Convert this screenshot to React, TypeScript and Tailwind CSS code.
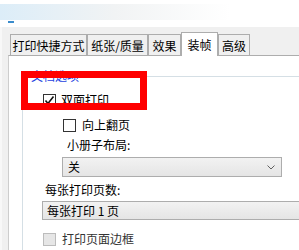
import React from "react";

const font = { fontFamily: '"Noto Sans CJK SC", "Noto Sans", sans-serif' };

function Tab({ label, w, selected }: { label: string; w: number; selected?: boolean }) {
  if (selected) {
    return (
      <div
        className="relative z-10 -mb-px flex h-[24px] items-center justify-center border border-b-0 border-[#adadad] bg-white text-[12px] leading-none text-black"
        style={{ width: w }}
      >
        {label}
      </div>
    );
  }
  return (
    <div
      className="flex h-[21px] items-center justify-center border border-b-0 border-[#adadad] bg-[#f0f0f0] pt-[1px] text-[12px] leading-none text-black"
      style={{ width: w }}
    >
      {label}
    </div>
  );
}

function Check({ checked, disabled }: { checked?: boolean; disabled?: boolean }) {
  return (
    <div
      className={
        disabled
          ? "h-[13px] w-[13px] shrink-0 border border-[#bcbcbc] bg-[#e6e6e6]"
          : "relative h-[13px] w-[13px] shrink-0 border border-[#333333] bg-white"
      }
    >
      {checked && (
        <svg width="11" height="11" viewBox="0 0 11 11" className="absolute left-0 top-0">
          <polyline points="1.5,5.5 4,8.5 9.5,1.5" fill="none" stroke="#111" strokeWidth="1.6" />
        </svg>
      )}
    </div>
  );
}

export default function App() {
  return (
    <div className="relative h-[250px] w-[299px] overflow-hidden bg-white" style={font}>
      {/* top strip */}
      <div className="h-[27px] bg-white pt-[4px]">
        <div className="h-[16px] w-[230px] bg-gradient-to-r from-[#dcedf8] via-[#f1f3f4] to-white" />
        <div className="ml-[8px] mt-[1px] h-[2px] w-[6px] bg-[#3b8ccc]" />
      </div>
      {/* window body */}
      <div className="flex h-[223px]">
        <div className="w-[2px] shrink-0 bg-[#f8f8f8]" />
        <div className="flex flex-1 flex-col bg-[#f0f0f0] pl-[6px] pt-[5px]">
          <div className="flex items-end pl-[2px]">
            <Tab label="打印快捷方式" w={77} />
            <Tab label="纸张/质量" w={61} />
            <Tab label="效果" w={33} />
            <Tab label="装帧" w={37} selected />
            <Tab label="高级" w={32} />
          </div>
          <div className="flex-1 border-l border-t border-[#adadad] border-l-[#cdcdcd] bg-white pt-[14px]">
            <div className="ml-[13px] flex flex-col">
              {/* group header */}
              <div className="flex h-[12px] items-center">
                <div className="h-px w-[8px] bg-[#d5dfe5]" />
                <span className="px-[1px] text-[12px] leading-none text-[#1d3fe0]">文档选项</span>
                <div className="h-px flex-1 bg-[#d5dfe5]" />
              </div>
              <div className="flex flex-col border-l border-[#d5dfe5] pb-[20px] text-[12px] leading-[14px] text-black">
                <div className="ml-[20px] mt-[11px] flex items-center gap-[5px]">
                  <Check checked />
                  <span>双面打印</span>
                </div>
                <div className="ml-[40px] mt-[11px] flex items-center gap-[6px]">
                  <Check />
                  <span>向上翻页</span>
                </div>
                <div className="ml-[44px] mt-[6px]">小册子布局:</div>
                <div className="ml-[39px] mt-[5px] flex h-[20px] w-[220px] items-center justify-between border border-[#adadad] bg-gradient-to-b from-[#f2f2f2] to-[#e5e5e5] pl-[5px] pr-[6px]">
                  <span>关</span>
                  <svg width="8" height="5" viewBox="0 0 8 5">
                    <polyline points="0.5,0.5 4,4 7.5,0.5" fill="none" stroke="#606060" strokeWidth="1" />
                  </svg>
                </div>
                <div className="ml-[22px] mt-[6px]">每张打印页数:</div>
                <div className="ml-[19px] mt-[4px] flex h-[19px] w-[300px] items-center border border-[#adadad] bg-gradient-to-b from-[#f2f2f2] to-[#e5e5e5] pl-[4px]">
                  <span>每张打印 1 页</span>
                </div>
                <div className="ml-[20px] mt-[12px] flex items-center gap-[6px]">
                  <Check disabled />
                  <span className="text-[#333]">打印页面边框</span>
                </div>
              </div>
            </div>
          </div>
        </div>
      </div>
      {/* red annotation box */}
      <div className="absolute left-[21px] top-[71px] h-[39px] w-[126px] border-[7px] border-[#ff0000]" />
    </div>
  );
}
